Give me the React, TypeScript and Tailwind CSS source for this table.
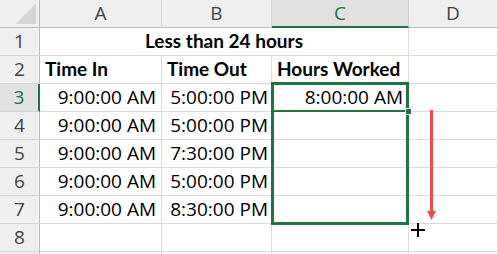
import React from 'react';

const cols = ['A', 'B', 'C', 'D'];

const rows: { a?: string; b?: string; c?: string; kind?: 'title' | 'head' }[] = [
  { a: 'Less than 24 hours', kind: 'title' },
  { a: 'Time In', b: 'Time Out', c: 'Hours Worked', kind: 'head' },
  { a: '9:00:00 AM', b: '5:00:00 PM', c: '8:00:00 AM' },
  { a: '9:00:00 AM', b: '5:00:00 PM' },
  { a: '9:00:00 AM', b: '7:30:00 PM' },
  { a: '9:00:00 AM', b: '5:00:00 PM' },
  { a: '9:00:00 AM', b: '8:30:00 PM' },
  {},
  {},
];

const cell = 'h-[28px] border-r border-b border-[#dadada] flex items-center px-[5px] whitespace-nowrap overflow-hidden';
const bold = "font-bold text-[19px] [font-family:Lato,'Open_Sans',sans-serif]";

export default function App() {
  return (
    <div
      className="relative w-[498px] h-[254px] overflow-hidden bg-white text-black text-[19px]"
      style={{ fontFamily: '"Open Sans", "Noto Sans", sans-serif' }}
    >
      <div className="grid grid-cols-[40px_122px_110px_137px_1fr]">
        {/* corner */}
        <div className="relative h-[28px] bg-[#efefef] border-r border-b border-[#bcbcbc]">
          <svg className="absolute left-0 top-0" width="40" height="28" viewBox="0 0 40 28">
            <polygon points="36,3 36,24 16,24" fill="#d6d6d6" />
          </svg>
        </div>
        {cols.map((c) => (
          <div
            key={c}
            className={
              c === 'C'
                ? 'h-[28px] flex items-center justify-center bg-[#e1e1e1] text-[#1e7145] border-r border-[#d0d0d0] border-b-2 border-b-[#217346]'
                : 'h-[28px] flex items-center justify-center bg-[#efefef] text-[#444444] border-r border-[#d6d6d6] border-b border-b-[#bcbcbc]'
            }
          >
            {c}
          </div>
        ))}

        {rows.map((r, i) => {
          const n = i + 1;
          const sel = n === 3;
          return (
            <React.Fragment key={n}>
              <div
                className={
                  sel
                    ? 'h-[28px] flex items-center justify-center bg-[#e1e1e1] text-[#1e7145] border-b border-[#d0d0d0] border-r-2 border-r-[#217346]'
                    : 'h-[28px] flex items-center justify-center bg-[#efefef] text-[#444444] border-b border-[#d6d6d6] border-r border-r-[#bcbcbc]'
                }
              >
                {n < 9 ? n : ''}
              </div>
              {r.kind === 'title' ? (
                <div className={`${cell} col-span-3 justify-center ${bold}`}>{r.a}</div>
              ) : (
                <>
                  <div className={`${cell} ${r.kind === 'head' ? bold : 'justify-end'}`}>{r.a}</div>
                  <div className={`${cell} ${r.kind === 'head' ? bold : 'justify-end'} pr-[3px]`}>{r.b}</div>
                  <div className={`${cell} ${r.kind === 'head' ? bold : 'justify-end'}`}>{r.c}</div>
                </>
              )}
              <div className={cell} />
            </React.Fragment>
          );
        })}
      </div>

      {/* selected range C3:C7 */}
      <div className="absolute left-[271px] top-[82px] w-[138px] h-[143px] border-[3px] border-[#217346] pointer-events-none" />
      {/* active cell bottom edge + fill handle */}
      <div className="absolute left-[271px] top-[110px] w-[137px] h-[2px] bg-[#217346]" />
      <div className="absolute left-[405px] top-[108px] w-[7px] h-[7px] bg-[#217346] border border-white" />

      {/* drag arrow */}
      <svg className="absolute left-[424px] top-[108px]" width="16" height="116" viewBox="0 0 16 116">
        <line x1="7.5" y1="2" x2="7.5" y2="104" stroke="#f24a4a" strokeWidth="3" />
        <polygon points="3,103 12,103 7.5,112" fill="#f24a4a" />
      </svg>

      {/* crosshair cursor */}
      <svg className="absolute left-[411px] top-[223px]" width="14" height="14" viewBox="0 0 14 14">
        <rect x="0" y="6" width="14" height="2" fill="#000" />
        <rect x="6" y="0" width="2" height="14" fill="#000" />
      </svg>
    </div>
  );
}
